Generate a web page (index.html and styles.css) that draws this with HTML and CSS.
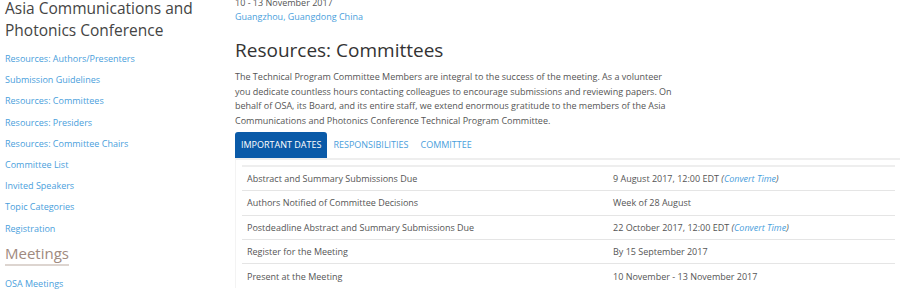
FILE: index.html
```html
<!DOCTYPE html>
<html lang="en">
<head>
    <meta charset="UTF-8">
    <title>Resources: Committees</title>
    <link rel="stylesheet" href="styles.css">
</head>
<body>
    <div class="page">
        <div class="sidebar">
            <h2 class="conf-title">Asia Communications and Photonics Conference</h2>
            <ul class="side-nav">
                <li><a href="#">Resources: Authors/Presenters</a></li>
                <li><a href="#">Submission Guidelines</a></li>
                <li><a href="#">Resources: Committees</a></li>
                <li><a href="#">Resources: Presiders</a></li>
                <li><a href="#">Resources: Committee Chairs</a></li>
                <li><a href="#">Committee List</a></li>
                <li><a href="#">Invited Speakers</a></li>
                <li><a href="#">Topic Categories</a></li>
                <li><a href="#">Registration</a></li>
            </ul>
            <h3 class="side-heading">Meetings</h3>
            <ul class="side-nav side-nav-last">
                <li><a href="#">OSA Meetings</a></li>
            </ul>
        </div>

        <div class="main">
            <div class="meta">
                <div class="dates">10 - 13 November 2017</div>
                <a href="#">Guangzhou, Guangdong China</a>
            </div>

            <h1>Resources: Committees</h1>
            <p class="intro">The Technical Program Committee Members are integral to the success of the meeting. As a volunteer you dedicate countless hours contacting colleagues to encourage submissions and reviewing papers. On behalf of OSA, its Board, and its entire staff, we extend enormous gratitude to the members of the Asia Communications and Photonics Conference Technical Program Committee.</p>

            <ul class="tabs">
                <li class="active"><a href="#">IMPORTANT DATES</a></li>
                <li><a href="#">RESPONSIBILITIES</a></li>
                <li><a href="#">COMMITTEE</a></li>
            </ul>
            <div class="tab-pane">
                <table class="dates-table">
                    <tr>
                        <td>Abstract and Summary Submissions Due</td>
                        <td>9 August 2017, 12:00 EDT <em>(<a href="#">Convert Time</a>)</em></td>
                    </tr>
                    <tr>
                        <td>Authors Notified of Committee Decisions</td>
                        <td>Week of 28 August</td>
                    </tr>
                    <tr>
                        <td>Postdeadline Abstract and Summary Submissions Due</td>
                        <td>22 October 2017, 12:00 EDT <em>(<a href="#">Convert Time</a>)</em></td>
                    </tr>
                    <tr>
                        <td>Register for the Meeting</td>
                        <td>By 15 September 2017</td>
                    </tr>
                    <tr>
                        <td>Present at the Meeting</td>
                        <td>10 November - 13 November 2017</td>
                    </tr>
                </table>
            </div>
        </div>
    </div>
</body>
</html>
```

FILE: styles.css
```css
body {
    margin: 0;
    font-family: "Open Sans", Arial, sans-serif;
    font-size: 9px;
    color: #555;
    background: #fff;
}
a {
    color: #4aa0dc;
    text-decoration: none;
}
.page {
    display: flex;
}
.sidebar {
    width: 230px;
    padding-left: 5px;
    flex-shrink: 0;
}
.conf-title {
    margin: -3px 0 0;
    font-size: 15.5px;
    font-weight: normal;
    line-height: 22px;
    color: #444;
}
.side-nav {
    list-style: none;
    margin: 7px 0 0;
    padding: 0;
}
.side-nav li {
    line-height: 21.2px;
}
.side-heading {
    display: inline-block;
    margin: 4px 0 0;
    padding-bottom: 1px;
    font-size: 15px;
    font-weight: normal;
    color: #a08a80;
    border-bottom: 2px solid #ddd5d0;
    line-height: 20px;
}
.side-nav-last {
    margin-top: 7px;
}
.main {
    flex: 1;
}
.meta {
    margin-top: -4px;
    line-height: 14px;
}
h1 {
    margin: 13px 0 7px;
    font-size: 19px;
    font-weight: normal;
    color: #333;
    line-height: 26px;
}
.intro {
    margin: 0 0 3px;
    max-width: 440px;
    line-height: 14.7px;
}
.tabs {
    list-style: none;
    margin: 0;
    padding: 0;
    display: flex;
}
.tabs li a {
    display: block;
    padding: 0 6px;
    line-height: 26px;
    border-radius: 3px 3px 0 0;
}
.tabs li.active a {
    background: #0a5aa8;
    color: #fff;
}
.tab-pane {
    border-top: 2px solid #eee;
    border-left: 1px solid #f3f3f3;
    padding: 5px 5px 0 6px;
}
.dates-table {
    width: 100%;
    border-collapse: collapse;
    border-top: 2px solid #eee;
}
.dates-table td {
    padding: 0 5px;
    height: 23.4px;
    border-bottom: 1px solid #e5e5e5;
}
.dates-table td:first-child {
    width: 356px;
}
.dates-table tr:last-child td {
    border-bottom: none;
}
```
